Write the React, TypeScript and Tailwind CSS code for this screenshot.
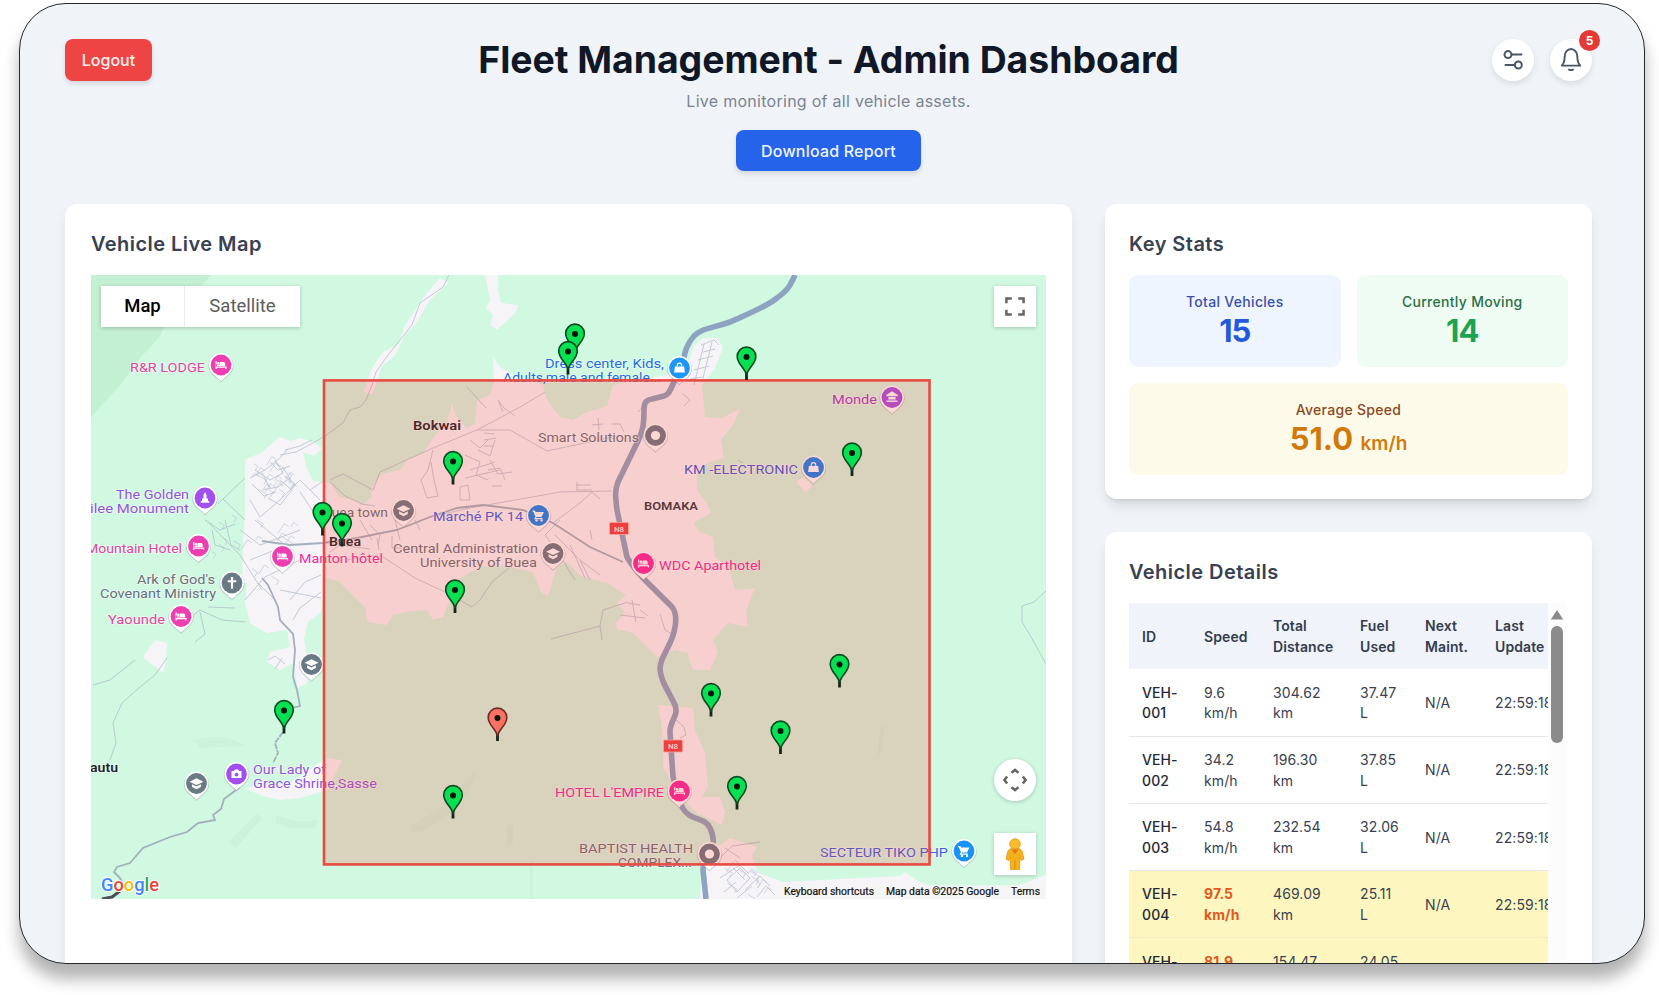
import React from "react";

type PoiKind = "bed" | "cap" | "bag" | "cart" | "dot" | "cross" | "camera" | "monument" | "bank";

type Label = { text: string; x: number; y: number; w: number; color: string; size?: number; bold?: boolean };

const PINK = "#ee3fb0";
const PURPLE = "#a14fee";
const SLATE = "#6a7a85";
const BLUE = "#1d6fe0";
const GREY = "#687079";

const pois: { x: number; y: number; color: string; kind: PoiKind }[] = [
  { x: 221, y: 365, color: PINK, kind: "bed" },
  { x: 205, y: 498, color: PURPLE, kind: "monument" },
  { x: 198.5, y: 546, color: PINK, kind: "bed" },
  { x: 232, y: 583, color: SLATE, kind: "cross" },
  { x: 181, y: 616.5, color: PINK, kind: "bed" },
  { x: 311.5, y: 664.5, color: SLATE, kind: "cap" },
  { x: 196.5, y: 783.5, color: SLATE, kind: "cap" },
  { x: 236.5, y: 774, color: PURPLE, kind: "camera" },
  { x: 403.5, y: 510.5, color: SLATE, kind: "cap" },
  { x: 282.5, y: 556.5, color: PINK, kind: "bed" },
  { x: 655.5, y: 435.5, color: SLATE, kind: "dot" },
  { x: 679.5, y: 368, color: "#1e96f5", kind: "bag" },
  { x: 892, y: 397.5, color: "#a64fe0", kind: "bank" },
  { x: 813.5, y: 467.5, color: "#1584ee", kind: "bag" },
  { x: 538.5, y: 515.5, color: "#1584ee", kind: "cart" },
  { x: 553, y: 553.5, color: SLATE, kind: "cap" },
  { x: 643.5, y: 563.5, color: "#f5289f", kind: "bed" },
  { x: 679.5, y: 791, color: "#f5289f", kind: "bed" },
  { x: 709.5, y: 854, color: SLATE, kind: "dot" },
  { x: 964, y: 851, color: "#1593f8", kind: "cart" },
];

const labels: Label[] = [
  { text: "R&R LODGE", x: 130, y: 372, w: 75, color: "#e0459f" },
  { text: "The Golden", x: 116, y: 498.5, w: 73, color: "#9355d8" },
  { text: "ilee Monument", x: 90, y: 512.5, w: 99, color: "#9355d8" },
  { text: "Mountain Hotel", x: 86, y: 553, w: 96, color: "#e0459f" },
  { text: "Ark of God's", x: 137, y: 583.5, w: 78, color: GREY },
  { text: "Covenant Ministry", x: 100, y: 597.5, w: 116, color: GREY },
  { text: "Yaounde", x: 108, y: 623.5, w: 57, color: "#e0459f" },
  { text: "Buea town", x: 323, y: 517, w: 65, color: GREY },
  { text: "Buea", x: 329, y: 545.5, w: 32, color: "#1f2328", bold: true },
  { text: "Manton hôtel", x: 299, y: 563, w: 84, color: "#ee2aa0" },
  { text: "Bokwai", x: 413, y: 430, w: 48, color: "#1f2328", bold: true },
  { text: "Smart Solutions", x: 538, y: 442, w: 101, color: GREY },
  { text: "Dress center, Kids,", x: 545, y: 368, w: 119, color: BLUE },
  { text: "Adults,male and female...", x: 503, y: 381.5, w: 158, color: BLUE },
  { text: "Monde", x: 832, y: 403.5, w: 45, color: "#a03cc0" },
  { text: "KM -ELECTRONIC", x: 684, y: 474, w: 114, color: "#3a58d8" },
  { text: "Marché PK 14", x: 433, y: 521, w: 90, color: "#3a62e0" },
  { text: "BOMAKA", x: 644, y: 510, w: 54, color: "#33383d", size: 11, bold: true },
  { text: "Central Administration", x: 393, y: 553, w: 145, color: GREY },
  { text: "University of Buea", x: 420, y: 567, w: 117, color: GREY },
  { text: "WDC Aparthotel", x: 659, y: 569.5, w: 102, color: "#ea2a9c" },
  { text: "HOTEL L'EMPIRE", x: 555, y: 797, w: 109, color: "#ea2a9c" },
  { text: "BAPTIST HEALTH", x: 579, y: 853, w: 114, color: GREY },
  { text: "COMPLEX...", x: 618, y: 867, w: 74, color: GREY },
  { text: "SECTEUR TIKO PHP", x: 820, y: 857, w: 128, color: "#3a62e0" },
  { text: "Our Lady of", x: 253, y: 773.5, w: 73, color: "#9355d8" },
  { text: "Grace Shrine,Sasse", x: 253, y: 788, w: 124, color: "#9355d8" },
  { text: "autu", x: 90, y: 771.5, w: 28, color: "#1f2328", bold: true },
];

const vehicles: { x: number; y: number; alert?: boolean }[] = [
  { x: 575, y: 334 },
  { x: 568, y: 351.5 },
  { x: 746.5, y: 357 },
  { x: 852, y: 453 },
  { x: 453, y: 461.5 },
  { x: 322.5, y: 512.5 },
  { x: 342, y: 523.5 },
  { x: 455, y: 590 },
  { x: 711, y: 693.5 },
  { x: 839.5, y: 664.5 },
  { x: 780.5, y: 731 },
  { x: 737, y: 786.5 },
  { x: 453, y: 795.5 },
  { x: 284, y: 710.5 },
  { x: 497.5, y: 718, alert: true },
];

const minorRoads = [
  "M449 275 L443 287 L420 303 L412 325 L400 340 L388 355 L376 372 L372 385 L366 400 L360 407 L350 410 L343 423 L325 436 L313 443 L296 452 L280 455",
  "M330 480 L343 474 L373 490 L380 472 L433 448 L477 430 L520 407 L545 392",
  "M477 430 L510 430 L547 451 L580 444 L618 436",
  "M430 517 L470 508 L560 492 L612 491",
  "M553 523 L580 503 L592 492 L600 499",
  "M330 482 L345 496 L362 504 L375 506",
  "M380 555 L415 578 L445 592 L472 607 L480 600 L492 582 L510 567",
  "M551 639 L600 626 L603 610 L628 602 M600 626 L602 640",
  "M433 450 L428 470 L421 480 L427 498 L438 496 L434 480 L431 462",
  "M467 387 L486 408 M498 400 L504 408 L515 416 M498 400 L503 412",
  "M560 520 L545 535 L555 548 L575 580 M555 535 L580 560 L600 575 M570 545 L585 578 M580 560 L590 580",
  "M592 425 L603 424 M598 418 L599 430 M612 424 L620 424 L624 432",
  "M576 485 L591 485 M577 490 L592 490 M577 482 L577 492",
  "M470 440 L480 448 L488 440 M478 450 L490 456 L495 440 M465 455 L480 462 L476 475 L488 480 M490 460 L498 474 L512 472 M488 470 L500 468 L505 480 M492 486 L502 486 M460 487 L468 485 L470 500 L460 500 Z",
  "M465 478 L500 470 M470 470 L495 462 M484 433 L495 434 M484 440 L496 438 M484 446 L494 446",
  "M395 520 L400 540 M370 525 L380 535 L378 545 M415 520 L420 530 M377 538 L379 550 M392 536 L392 548 L410 548",
  "M370 549 L340 545 L330 552 M345 560 L378 555 M360 520 L372 540",
  "M245 520 L223 499 M245 478 L223 499 L218 504 M206 520 L240 555 L262 590",
  "M180 625 L200 610 L222 620 L245 622 M200 612 L205 634 L195 642 M208 607 L235 608",
  "M93 685 L110 680 L135 660",
  "M167 658 L155 675 L140 687 L122 703 L113 723 L116 743 L110 760",
  "M1046 591 L1034 602 L1022 606 L1022 622 L1030 635 L1046 664",
  "M250 478 L265 470 L280 458 L288 449 M255 470 L270 480 L283 473 L275 460 M262 490 L278 487 L290 478 L283 468 M268 498 L280 505 L292 490 L280 480 M252 484 L264 496 L276 492",
  "M285 450 L300 446 L312 440 M250 500 L260 517 L280 500 M280 500 L300 480 L320 500 M270 462 L278 470 L290 466 M262 473 L270 488",
  "M310 490 L322 482 M300 492 L312 510 L322 515 M255 520 L285 545 M240 530 L260 545 L300 530 M250 560 L280 548",
  "M245 600 L265 577 L300 560 M258 583 L275 600 M290 600 L305 582 L321 575 M280 590 L321 598 M293 620 L300 608 L321 592",
  "M268 660 L275 656 L285 664 M275 669 L282 658",
  "M205 520 L220 530 L235 524 M212 530 L215 545 L230 550 M225 520 L231 545 L240 550",
  "M628 603 L640 605 M620 615 L645 618 M632 600 L636 622 M640 610 L648 616",
  "M660 614 L665 630 L672 634 M676 720 L684 727 L686 735 L680 738",
  "M701 345 L714 340 L719 345 M703 352 L715 349 M698 360 L713 356 M694 370 L709 366 M690 379 L702 377 M704 344 L694 385 M712 342 L702 382 M683 394 L690 400 L684 406",
  "M738 460 L743 463 M638 412 L642 408 M590 530 L592 540",
  "M718 860 L732 846 L760 842 M725 848 L740 858 M735 860 L748 873 M720 878 L740 865",
  "M727 880 L740 868 L750 878 L737 892 Z M745 890 L760 876 L770 886 M737 898 L752 886 M757 897 L766 886 L775 895 M733 868 L745 880 M724 892 L736 882",
];

function seeded(seed: number) {
  let s = seed;
  return () => {
    s = (s * 16807) % 2147483647;
    return s / 2147483647;
  };
}

function streetCluster(seed: number, x: number, y: number, w: number, h: number, count: number) {
  const rnd = seeded(seed);
  let d = "";
  for (let i = 0; i < count; i++) {
    const cx = x + rnd() * w;
    const cy = y + rnd() * h;
    const a = rnd() > 0.5 ? 0.55 : -1.0;
    const len = 4 + rnd() * 8;
    const ex = cx + Math.cos(a) * len;
    const ey = cy + Math.sin(a) * len;
    d += `M${cx.toFixed(1)} ${cy.toFixed(1)} L${ex.toFixed(1)} ${ey.toFixed(1)} l${(Math.sin(a) * -5).toFixed(1)} ${(Math.cos(a) * 5).toFixed(1)} `;
  }
  return d;
}

const clusters = [
  streetCluster(11, 252, 462, 38, 34, 22),
  streetCluster(29, 252, 520, 56, 60, 10),
  streetCluster(47, 725, 862, 42, 34, 12),
  streetCluster(83, 212, 515, 30, 40, 7),
];

function PoiGlyph({ kind }: { kind: PoiKind }) {
  switch (kind) {
    case "bed":
      return (
        <g fill="#fff">
          <path d="M-5.5 -4h1.3v5h8.4v-1.8c0-1.6-.8-2.2-2.2-2.2h-3v3h-3.4v-1h-.8v2.6h10.8v2.4h-1.2v-1.2h-8.6v1.2h-1.3z" />
          <circle cx="-2.6" cy="-1.6" r="1.3" />
        </g>
      );
    case "cap":
      return (
        <g fill="#fff">
          <path d="M0-5.2 7-1.8 0 1.6-7-1.8z" />
          <path d="M-4.4 .8 0 3 4.4 .8v2.8L0 5.8-4.4 3.6z" />
        </g>
      );
    case "bag":
      return (
        <g>
          <path d="M-4.6-1.6h9.2l.8 6h-10.8z" fill="#fff" />
          <path d="M-2.2-1.6v-1a2.2 2.2 0 0 1 4.4 0v1" fill="none" stroke="#fff" strokeWidth="1.2" />
        </g>
      );
    case "cart":
      return (
        <g fill="#fff">
          <path d="M-6-5h2.4l.8 1.6h8.2l-2.4 4.8h-5l-.6 1.1h6.6v1.2h-8.4l1.3-2.8-2.1-4.6h-.8z" />
          <circle cx="-2" cy="4.9" r="1.2" />
          <circle cx="3" cy="4.9" r="1.2" />
        </g>
      );
    case "cross":
      return <path d="M-1.1-6h2.2v3.2h3.2v2.1h-3.2v6.4h-2.2v-6.4h-3.2v-2.1h3.2z" fill="#fff" />;
    case "camera":
      return (
        <g>
          <path d="M-5-3h2.4l1-1.6h3.2l1 1.6h2.4v7h-10z" fill="#fff" />
          <circle cx="0" cy=".6" r="1.9" fill={PURPLE} />
        </g>
      );
    case "monument":
      return <path d="M0-6 1.5-3v3.6h1.5v2.4h1.2v1.8h-8.4v-1.8h1.2v-2.4h1.5v-3.6z" fill="#fff" />;
    case "bank":
      return (
        <g fill="#fff">
          <path d="M0-6.2 5.8-2.4v1.2h-11.6v-1.2z" />
          <path d="M-3.6-.4h7.2v2.4h-7.2zM-5.5 3h11v1.5h-11z" />
        </g>
      );
    default:
      return <circle r="4.6" fill="#fff" />;
  }
}

function Poi({ x, y, color, kind }: { x: number; y: number; color: string; kind: PoiKind }) {
  return (
    <g transform={`translate(${x} ${y})`}>
      <path d="M0 17.5 C-2.5 13.5 -12.6 9.5 -12.6 1 A12.6 12.6 0 0 1 12.6 1 C12.6 9.5 2.5 13.5 0 17.5z" fill="#7b8794" opacity=".4" />
      <path d="M0 16.3 C-2 13 -12 9 -12 0 A12 12 0 0 1 12 0 C12 9 2 13 0 16.3z" fill="#fff" />
      <circle r="10.4" fill={color} />
      <PoiGlyph kind={kind} />
    </g>
  );
}

function VehiclePin({ x, y, alert }: { x: number; y: number; alert?: boolean }) {
  return (
    <g transform={`translate(${x} ${y})`}>
      <path d="M0 10V23" stroke="#16261a" strokeWidth="2.8" />
      <path
        d="M0 18 C-1.6 11 -9.3 7 -9.3 -.6 A9.3 9.3 0 0 1 9.3 -.6 C9.3 7 1.6 11 0 18z"
        fill={alert ? "#fb7265" : "#05e152"}
        stroke={alert ? "#6d2c28" : "#0b4a1f"}
        strokeWidth="1.6"
      />
      <circle r="3" fill="#06140a" />
    </g>
  );
}

function RouteShield({ x, y }: { x: number; y: number }) {
  return (
    <g>
      <rect x={x - 9.5} y={y - 6} width="19" height="12" rx="1" fill="#e84242" stroke="#f7b9b4" strokeWidth=".8" />
      <text x={x} y={y + 3} textAnchor="middle" fontSize="8" fontWeight="700" fill="#fbdcd8">
        N8
      </text>
    </g>
  );
}

function MapCanvas() {
  return (
    <svg viewBox="91 275 955 624" className="block h-full w-full font-['Roboto',sans-serif]">
      <rect x="91" y="275" width="955" height="624" fill="#d1f8e1" />
      <path d="M91 275H211L192 296 168 318 160 336 140 358 120 385 91 417z" fill="#c3efd2" />
      <path d="M195 740Q225 732 245 746L200 748zM276 815q25 10 42 4l-2 8q-24 4-40-4z" fill="#cbf3db" />
      <path d="M228 842l28-28 6 4-26 30z" fill="#cbf3db" />
      <path d="M412 833q30-6 55-38l10-22-8 2-18 24q-22 18-42 28z" fill="#cef5de" />
      <path d="M507 825h6v20h-6zM530 860h3v39h-3zM880 730l4-6-2 26-4 6z" fill="#ccf3dc" />

      <g fill="#f6f4f7">
        <path d="M245 460 262 452 280 437 291 441 300 438 313 442 322 448 314 456 303 452 306 466 313 481 330 483 340 497 354 500 362 505 372 497 371 488 382 474 400 470 407 460 423 453 433 438 447 422 452 403 456 416 467 428 475 423 477 400 490 395 494 382 493 357 500 367 515 376 543 385 547 400 560 417 573 420 587 412 607 406 613 385 640 380 686 371 694 345 704 338 718 338 723 348 715 368 702 385 705 417 722 418 741 408 733 425 721 440 724 458 707 463 697 473 697 490 706 502 711 513 693 523 700 532 713 537 715 557 728 566 735 590 755 588 750 600 746 612 748 627 728 623 713 640 718 653 710 670 693 670 687 653 675 650 657 657 645 645 633 633 617 629 616 622 625 613 617 603 626 595 607 583 580 576 567 562 557 567 548 597 541 592 533 572 505 566 480 567 457 580 452 595 443 617 433 620 427 610 407 612 393 615 387 625 367 622 365 607 354 597 340 582 325 577 321 612 308 622 304 638 308 665 307 683 298 688 293 663 280 670 267 662 270 652 290 647 287 630 267 633 250 623 245 603 247 583 242 583 243 545 245 510z" />
        <path d="M658 705 693 708 695 730 705 753 708 787 702 797 720 797 725 812 722 825 697 813 684 800 670 780 663 767 663 747 661 722z" />
        <path d="M730 838 757 847 752 855 757 872 783 882 900 876 905 872 916 880 940 890 1020 885 1046 875V899H700L702 857z" />
        <path d="M485 275H498V290L501 303 518 305 516 312 497 330 490 325 493 315 486 308 490 300z" />
        <path d="M440 278 449 283 430 300 415 325 405 335 395 356 382 366 372 395 364 392 372 368 383 352 398 345 405 325 415 310 425 295z" />
        <path d="M155 640 167 643 166 660 163 673 143 657z" />
        <path d="M245 788 290 783 326 758 342 760 328 790 300 798 280 800 262 796z" />
        <path d="M796 482 803 477 812 485 806 493z" />
      </g>

      <g fill="none" stroke="#a8b2c4" strokeWidth="1" opacity=".62">
        {minorRoads.map((d) => (
          <path key={d} d={d} />
        ))}
      </g>
      <g fill="none" stroke="#a9b6ca" strokeWidth=".9" opacity=".55">
        {clusters.map((d) => (
          <path key={d} d={d} />
        ))}
      </g>
      <g fill="none" stroke="#a3afbd" strokeWidth="1.8">
        <path d="M262 541 290 545 323 543 357 538 397 530 430 517 457 508 483 505 523 510 553 523 590 547 623 562" />
        <path d="M262 578 268 585 278 607 280 620 293 634 295 650 293 677 297 690 300 706 292 708" />
        <path d="M283 732 275 743 278 753 273 763" strokeDasharray="6 1" />
        <path d="M240 787 224 799 221 809 213 815 215 820 198 823 187 832 170 837 143 848 130 863 117 867 114 872 120 878 123 884" />
      </g>
      <path d="M102 899 112 897 120 891" fill="none" stroke="#4b5157" strokeWidth="3" />
      <path
        d="M795 275 C790 286 788 290 777 298 C766 307 748 314 730 322 C710 329 702 328 694 336 C686 345 685 352 683 362 L675 380 C670 390 669 395 664 396 L652 399 C645 400 644 404 644 410 C644 425 643 430 638 441 L618 482 C614 492 616 500 617 510 L627 557 C630 563 636 570 642 577 L672 607 C677 613 676 624 674 632 C670 648 661 655 660 668 C660 680 668 690 675 705 C679 716 670 720 670 732 L673 777 L682 807 C690 822 704 816 710 828 C715 838 714 846 711 854 C706 862 703 862 703 870 L706 899"
        fill="none"
        stroke="#8ea3bf"
        strokeWidth="5.6"
      />

      {labels.map((l) => (
        <text
          key={l.text}
          x={l.x}
          y={l.y}
          textLength={l.w}
          lengthAdjust="spacingAndGlyphs"
          fontSize={l.size ?? 13}
          fontWeight={l.bold ? 600 : 400}
          fill={l.color}
          stroke="#ffffff"
          strokeOpacity=".55"
          strokeWidth="1.6"
          paintOrder="stroke"
        >
          {l.text}
        </text>
      ))}
      {pois.map((p) => (
        <Poi key={`${p.x}-${p.y}`} {...p} />
      ))}
      <RouteShield x={619} y={528.5} />
      <RouteShield x={673} y={746} />

      <rect x="324" y="380.4" width="605.5" height="484" fill="#f93a2d" fillOpacity=".2" stroke="#e94b43" strokeWidth="2.6" />
      {vehicles.map((v) => (
        <VehiclePin key={`${v.x}-${v.y}`} {...v} />
      ))}

      <rect x="780" y="885" width="266" height="14" fill="#f5f5f5" opacity=".75" />
      <g fontSize="10" fill="#111" stroke="#111" strokeWidth=".2">
        <text x="784" y="895" textLength="90" lengthAdjust="spacingAndGlyphs">Keyboard shortcuts</text>
        <text x="886" y="895" textLength="113" lengthAdjust="spacingAndGlyphs">Map data ©2025 Google</text>
        <text x="1011" y="895" textLength="29" lengthAdjust="spacingAndGlyphs">Terms</text>
      </g>
      <text x="101" y="891" fontSize="19" textLength="58" lengthAdjust="spacingAndGlyphs" fontWeight="500" stroke="#fff" strokeWidth="2" paintOrder="stroke">
        <tspan fill="#4285f4">G</tspan>
        <tspan fill="#ea4335">o</tspan>
        <tspan fill="#fbbc05">o</tspan>
        <tspan fill="#4285f4">g</tspan>
        <tspan fill="#34a853">l</tspan>
        <tspan fill="#ea4335">e</tspan>
      </text>
    </svg>
  );
}

function LiveMap() {
  return (
    <div className="relative h-[624px] w-[955px] overflow-hidden">
      <MapCanvas />
      <div className="absolute left-[10px] top-[11px] flex h-[41px] bg-white font-['Roboto',sans-serif] text-[18.5px] leading-[41px] shadow-[0_1px_4px_rgba(0,0,0,0.22)]">
        <div className="w-[84px] border-r border-[#ececec] text-center font-medium text-black">Map</div>
        <div className="w-[115px] text-center text-[#5c5c5c]">Satellite</div>
      </div>
      <div className="absolute right-[10px] top-[11px] flex h-[41px] w-[42px] items-center justify-center bg-white shadow-[0_1px_4px_rgba(0,0,0,0.22)]">
        <svg width="20" height="19" viewBox="0 0 20 19" fill="none" stroke="#666" strokeWidth="2.5">
          <path d="M1.4 6.3V1.4h5.4M13.2 1.4h5.4v4.9M18.6 12.7v4.9h-5.4M6.8 17.6H1.4v-4.9" />
        </svg>
      </div>
      <div className="absolute bottom-[98px] right-[10px] flex size-[42px] items-center justify-center rounded-full bg-white shadow-[0_1px_4px_rgba(0,0,0,0.2)]">
        <svg width="26" height="26" viewBox="0 0 26 26" fill="none" stroke="#666" strokeWidth="2.6">
          <path d="M9.5 5.8 13 3l3.5 2.8M9.5 20.2 13 23l3.5-2.8M5.2 9.5 2.4 13l2.8 3.5M20.8 9.5l2.8 3.5-2.8 3.5" />
        </svg>
      </div>
      <div className="absolute bottom-[24px] right-[10px] flex size-[42px] items-center justify-center bg-white shadow-[0_1px_4px_rgba(0,0,0,0.2)]">
        <svg width="20" height="32" viewBox="0 0 20 32">
          <path d="M5 11 10 9.5 15 11 17 13 19 21 16.5 22.5 15 19.5 14.5 31.5H5.5L5 19.5 3.5 22.5 1 21 3 13z" fill="#f5b01e" stroke="#e49413" strokeWidth=".8" />
          <circle cx="10" cy="6" r="5.3" fill="#fbbc2b" stroke="#e49413" strokeWidth=".8" />
          <path d="M6.5 11.5 10 16l3.5-4.5z" fill="#d97a16" />
          <path d="M10 22v9" stroke="#d98d16" />
        </svg>
      </div>
    </div>
  );
}

const heading = "text-[20px] font-semibold leading-[28px] tracking-[0.45px] text-[#374151]";

function KeyStats() {
  return (
    <section className="h-[295px] rounded-[12px] bg-white px-[24px] pt-[26px] shadow-[0_8px_14px_-3px_rgba(0,0,0,0.13),0_3px_5px_-3px_rgba(0,0,0,0.16)]">
      <h2 className={heading}>Key Stats</h2>
      <div className="mt-[17px] grid grid-cols-2 gap-x-[16px] gap-y-[16px] text-center">
        <div className="h-[92px] rounded-[9px] bg-[#eff5ff] pt-[16px]">
          <p className="text-[14px] font-medium leading-[21px] tracking-[0.3px] text-[#3b4fa8]">Total Vehicles</p>
          <p className="text-[31px] font-bold leading-[37px] tracking-[-1px] text-[#2558d8]">15</p>
        </div>
        <div className="h-[92px] rounded-[9px] bg-[#effcf4] pt-[16px]">
          <p className="text-[14px] font-medium leading-[21px] tracking-[0.3px] text-[#2a7046]">Currently Moving</p>
          <p className="text-[31px] font-bold leading-[37px] tracking-[-1px] text-[#1ca352]">14</p>
        </div>
        <div className="col-span-2 h-[92px] rounded-[9px] bg-[#fefaea] pt-[16px]">
          <p className="text-[14px] font-medium leading-[21px] tracking-[0.3px] text-[#8a4a1c]">Average Speed</p>
          <p className="text-[31px] font-bold leading-[37px] text-[#d07a0c]">
            51.0 <span className="text-[19px] font-semibold">km/h</span>
          </p>
        </div>
      </div>
    </section>
  );
}

const rows = [
  { id: "001", speed: "9.6", distance: "304.62", fuel: "37.47", fast: false },
  { id: "002", speed: "34.2", distance: "196.30", fuel: "37.85", fast: false },
  { id: "003", speed: "54.8", distance: "232.54", fuel: "32.06", fast: false },
  { id: "004", speed: "97.5", distance: "469.09", fuel: "25.11", fast: true },
  { id: "005", speed: "81.9", distance: "154.47", fuel: "24.05", fast: true },
];

const columns = ["w-[62px]", "w-[69px]", "w-[87px]", "w-[65px]", "w-[70px]", "w-[90px]"];

function VehicleDetails() {
  return (
    <section className="h-[600px] rounded-[12px] bg-white px-[24px] pt-[26px] shadow-[0_8px_14px_-3px_rgba(0,0,0,0.13)]">
      <h2 className={heading}>Vehicle Details</h2>
      <div className="mt-[17px] flex h-[500px]">
        <div className="w-[419px] shrink-0 overflow-hidden">
          <table className="w-[443px] table-fixed border-collapse text-left text-[14px] leading-[20.7px] tracking-[0.1px] text-[#374151]">
            <colgroup>
              {columns.map((c, i) => (
                <col key={i} className={c} />
              ))}
            </colgroup>
            <thead>
              <tr className="h-[66px] bg-[#f0f4fa] text-[#333d4d] [&>th]:pl-[13px] [&>th]:pt-[2px] [&>th]:font-semibold">
                <th>ID</th>
                <th>Speed</th>
                <th>Total<br />Distance</th>
                <th>Fuel<br />Used</th>
                <th>Next<br />Maint.</th>
                <th>Last<br />Update</th>
              </tr>
            </thead>
            <tbody>
              {rows.map((r) => (
                <tr
                  key={r.id}
                  className={
                    r.fast
                      ? "h-[67.2px] border-b border-[#f1ecc4] bg-[#fdf7bf] [&>td]:pl-[13px] [&>td]:pt-[2px]"
                      : "h-[67.2px] border-b border-[#e4e7ec] [&>td]:pl-[13px] [&>td]:pt-[2px]"
                  }
                >
                  <td className="font-medium text-[#1f2937]">VEH-<br />{r.id}</td>
                  <td className={r.fast ? "font-bold text-[#e2591b]" : ""}>{r.speed}<br />km/h</td>
                  <td>{r.distance}<br />km</td>
                  <td>{r.fuel}<br />L</td>
                  <td>N/A</td>
                  <td>22:59:18</td>
                </tr>
              ))}
            </tbody>
          </table>
        </div>
        <div className="flex w-[19px] flex-col items-center bg-[#fcfcfc] pr-[1px] pt-[7px]">
          <svg width="14" height="10" viewBox="0 0 14 10" fill="#8b8b8b">
            <path d="M7 0 13.2 9.5H.8z" />
          </svg>
          <div className="mt-[6px] h-[117px] w-[12px] rounded-full bg-[#8b8b8b]" />
        </div>
      </div>
    </section>
  );
}

function Header() {
  return (
    <header className="grid grid-cols-[1fr_auto_1fr] items-start">
      <button className="h-[42px] w-[87px] rounded-[8px] bg-[#ef4444] text-[16px] font-medium text-[#fff0f0] shadow-[0_3px_5px_rgba(0,0,0,0.12)]">
        Logout
      </button>
      <div className="flex flex-col items-center">
        <h1 className="whitespace-nowrap text-[37.4px] font-bold leading-[42px] tracking-[-0.03px] text-[#101726]">Fleet Management - Admin Dashboard</h1>
        <p className="mt-[8px] text-[16px] leading-[24px] tracking-[0.28px] text-[#7b8492]">Live monitoring of all vehicle assets.</p>
        <button className="mt-[17px] h-[41px] w-[185px] rounded-[8px] bg-[#2563eb] text-[16px] font-medium tracking-[0.2px] text-[#eef4ff] shadow-[0_3px_5px_rgba(0,0,0,0.12)]">
          Download Report
        </button>
      </div>
      <div className="flex justify-end gap-[16px]">
        <button className="flex size-[42px] items-center justify-center rounded-full bg-white shadow-[0_3px_6px_rgba(0,0,0,0.1)]">
          <svg width="24" height="24" viewBox="0 0 24 24" fill="none" stroke="#4b5563" strokeWidth="2" strokeLinecap="round">
            <circle cx="7" cy="6.6" r="3.5" />
            <path d="M10.5 6.6H20.5M4.5 17H13.8" />
            <circle cx="17.3" cy="17" r="3.5" />
          </svg>
        </button>
        <div className="relative">
          <button className="flex size-[42px] items-center justify-center rounded-full bg-white shadow-[0_3px_6px_rgba(0,0,0,0.1)]">
            <svg width="24" height="26" viewBox="0 0 24 26" fill="none" stroke="#4b5563" strokeWidth="1.9" strokeLinecap="round" strokeLinejoin="round">
              <path d="M2.8 18.6C5 16.2 5.6 13.6 5.7 9.4a6.3 7.4 0 0 1 12.6 0c.1 4.2.7 6.8 2.9 9.2z" />
              <path d="M10 22.6q2 1.1 4 0" />
            </svg>
          </button>
          <span className="absolute -right-[8px] -top-[9px] flex size-[21px] items-center justify-center rounded-full bg-[#e53935] text-[12px] font-bold text-white">
            5
          </span>
        </div>
      </div>
    </header>
  );
}

export default function App() {
  return (
    <div className="h-[995px] w-full overflow-hidden bg-white pl-[19px] pt-[3px] font-['Inter',sans-serif]">
      <div className="h-[961px] w-[1626px] overflow-hidden rounded-[47px] border border-[#26282b] bg-[#f0f4f9] pl-[45px] pr-[52px] pt-[35px] shadow-[0_15px_16px_rgba(0,0,0,0.3)]">
        <Header />
        <main className="mt-[33px] flex gap-[33px]">
          <section className="h-[800px] w-[1007px] shrink-0 rounded-[12px] bg-white pl-[26px] pt-[26px] shadow-[0_6px_12px_rgba(0,0,0,0.07)]">
            <h2 className={heading}>Vehicle Live Map</h2>
            <div className="mt-[17px]">
              <LiveMap />
            </div>
          </section>
          <div className="flex flex-1 flex-col gap-[33px]">
            <KeyStats />
            <VehicleDetails />
          </div>
        </main>
      </div>
    </div>
  );
}
